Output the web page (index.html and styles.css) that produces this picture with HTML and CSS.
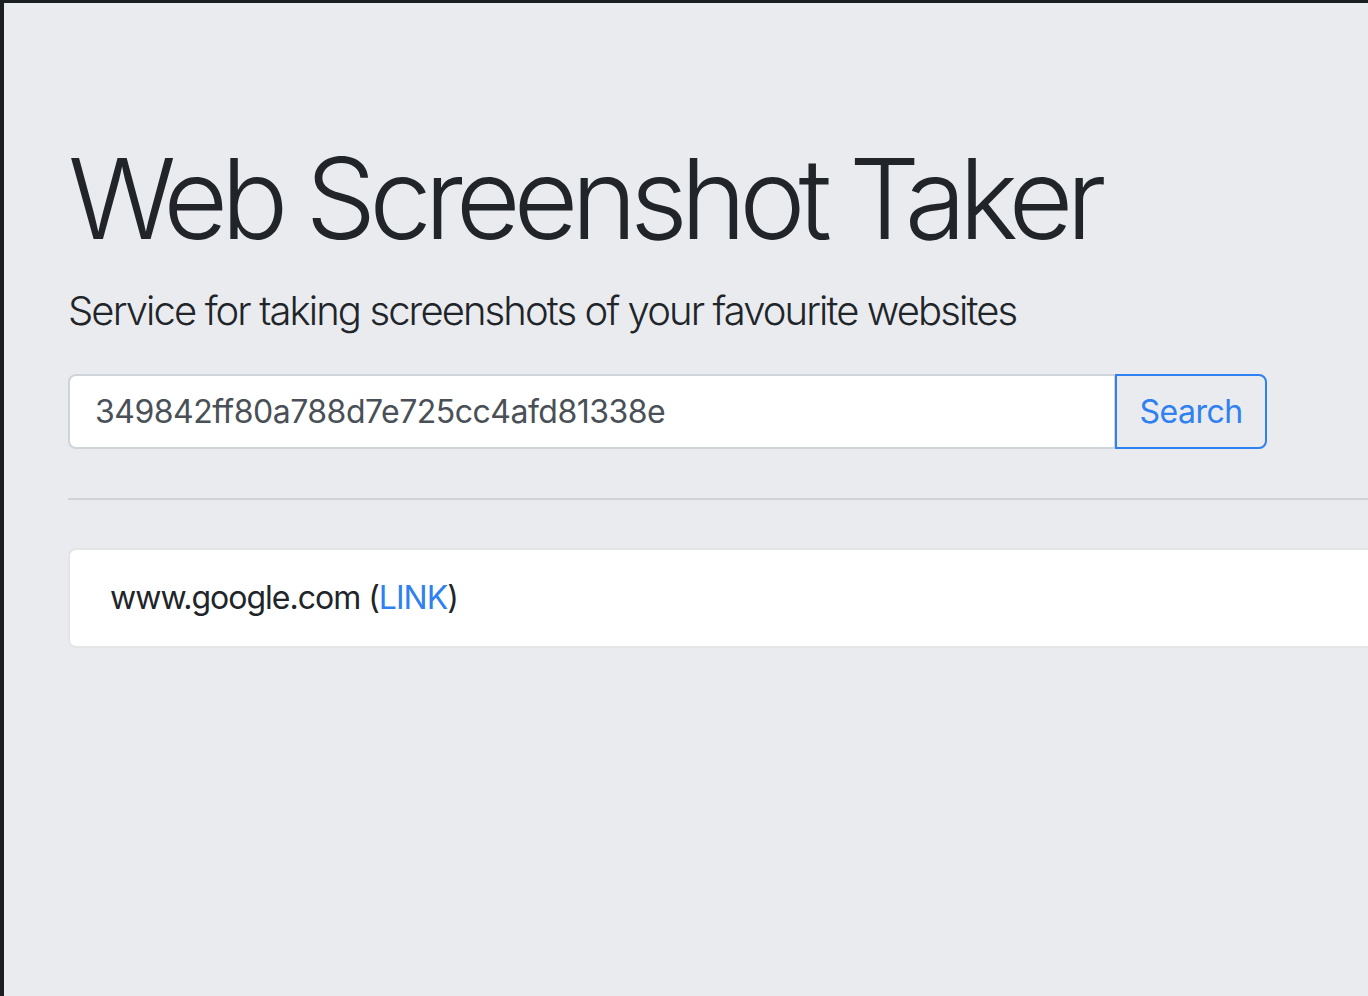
FILE: index.html
```html
<!DOCTYPE html>
<html lang="en">
<head>
<meta charset="utf-8">
<title>Web Screenshot Taker</title>
<link rel="stylesheet" href="styles.css">
</head>
<body>
<div class="frame">
  <main class="jumbotron">
    <h1 class="title">Web Screenshot Taker</h1>
    <p class="lead">Service for taking screenshots of your favourite websites</p>
    <form class="search">
      <input class="search-input" type="text" value="349842ff80a788d7e725cc4afd81338e">
      <button class="search-btn" type="button">Search</button>
    </form>
    <hr class="divider">
    <ul class="results">
      <li class="result">www.google.com (<a class="link" href="#">LINK</a>)</li>
    </ul>
  </main>
</div>
</body>
</html>
```

FILE: styles.css
```css
html, body {
  margin: 0;
  height: 100%;
}
body {
  background: #1c1f22;
  overflow: hidden;
  font-family: Inter, "Liberation Sans", sans-serif;
  color: #212529;
}
.frame {
  padding: 3px 0 0 4px;
  height: 100%;
  box-sizing: border-box;
}
.jumbotron {
  background: #e9ebef;
  height: 100%;
  width: 1500px;
  box-sizing: border-box;
  padding: 128px 64px;
}
.title {
  margin: 0 0 16px;
  font-size: 112px;
  font-weight: 300;
  line-height: 1.2;
  letter-spacing: -7.2px;
}
.lead {
  margin: 0 0 33px;
  font-size: 40px;
  font-weight: 300;
  line-height: 1.5;
  letter-spacing: -1.9px;
}
.search {
  display: flex;
  width: 1199px;
  margin: 0;
}
.search-input {
  flex: 1;
  height: 75px;
  box-sizing: border-box;
  border: 2px solid #ced4da;
  border-radius: 8px 0 0 8px;
  padding: 0 25px;
  font: 400 32px Inter, "Liberation Sans", sans-serif;
  letter-spacing: -0.5px;
  color: #495057;
  background: #fff;
  outline: none;
}
.search-btn {
  width: 152px;
  height: 75px;
  box-sizing: border-box;
  border: 2px solid #2f80f0;
  border-radius: 0 8px 8px 0;
  background: transparent;
  color: #2f80f0;
  font: 400 32px Inter, "Liberation Sans", sans-serif;
  letter-spacing: -0.5px;
  margin-left: -1px;
}
.divider {
  margin: 49px 0 48px;
  border: 0;
  border-top: 2px solid rgba(0,0,0,.1);
}
.results {
  list-style: none;
  margin: 0;
  padding: 0;
}
.result {
  background: #fff;
  border: 2px solid rgba(0,0,0,.1);
  border-radius: 8px;
  padding: 24px 40px;
  font-size: 32px;
  line-height: 48px;
  letter-spacing: -1px;
}
.link {
  color: #2f80f0;
  text-decoration: none;
}
```
